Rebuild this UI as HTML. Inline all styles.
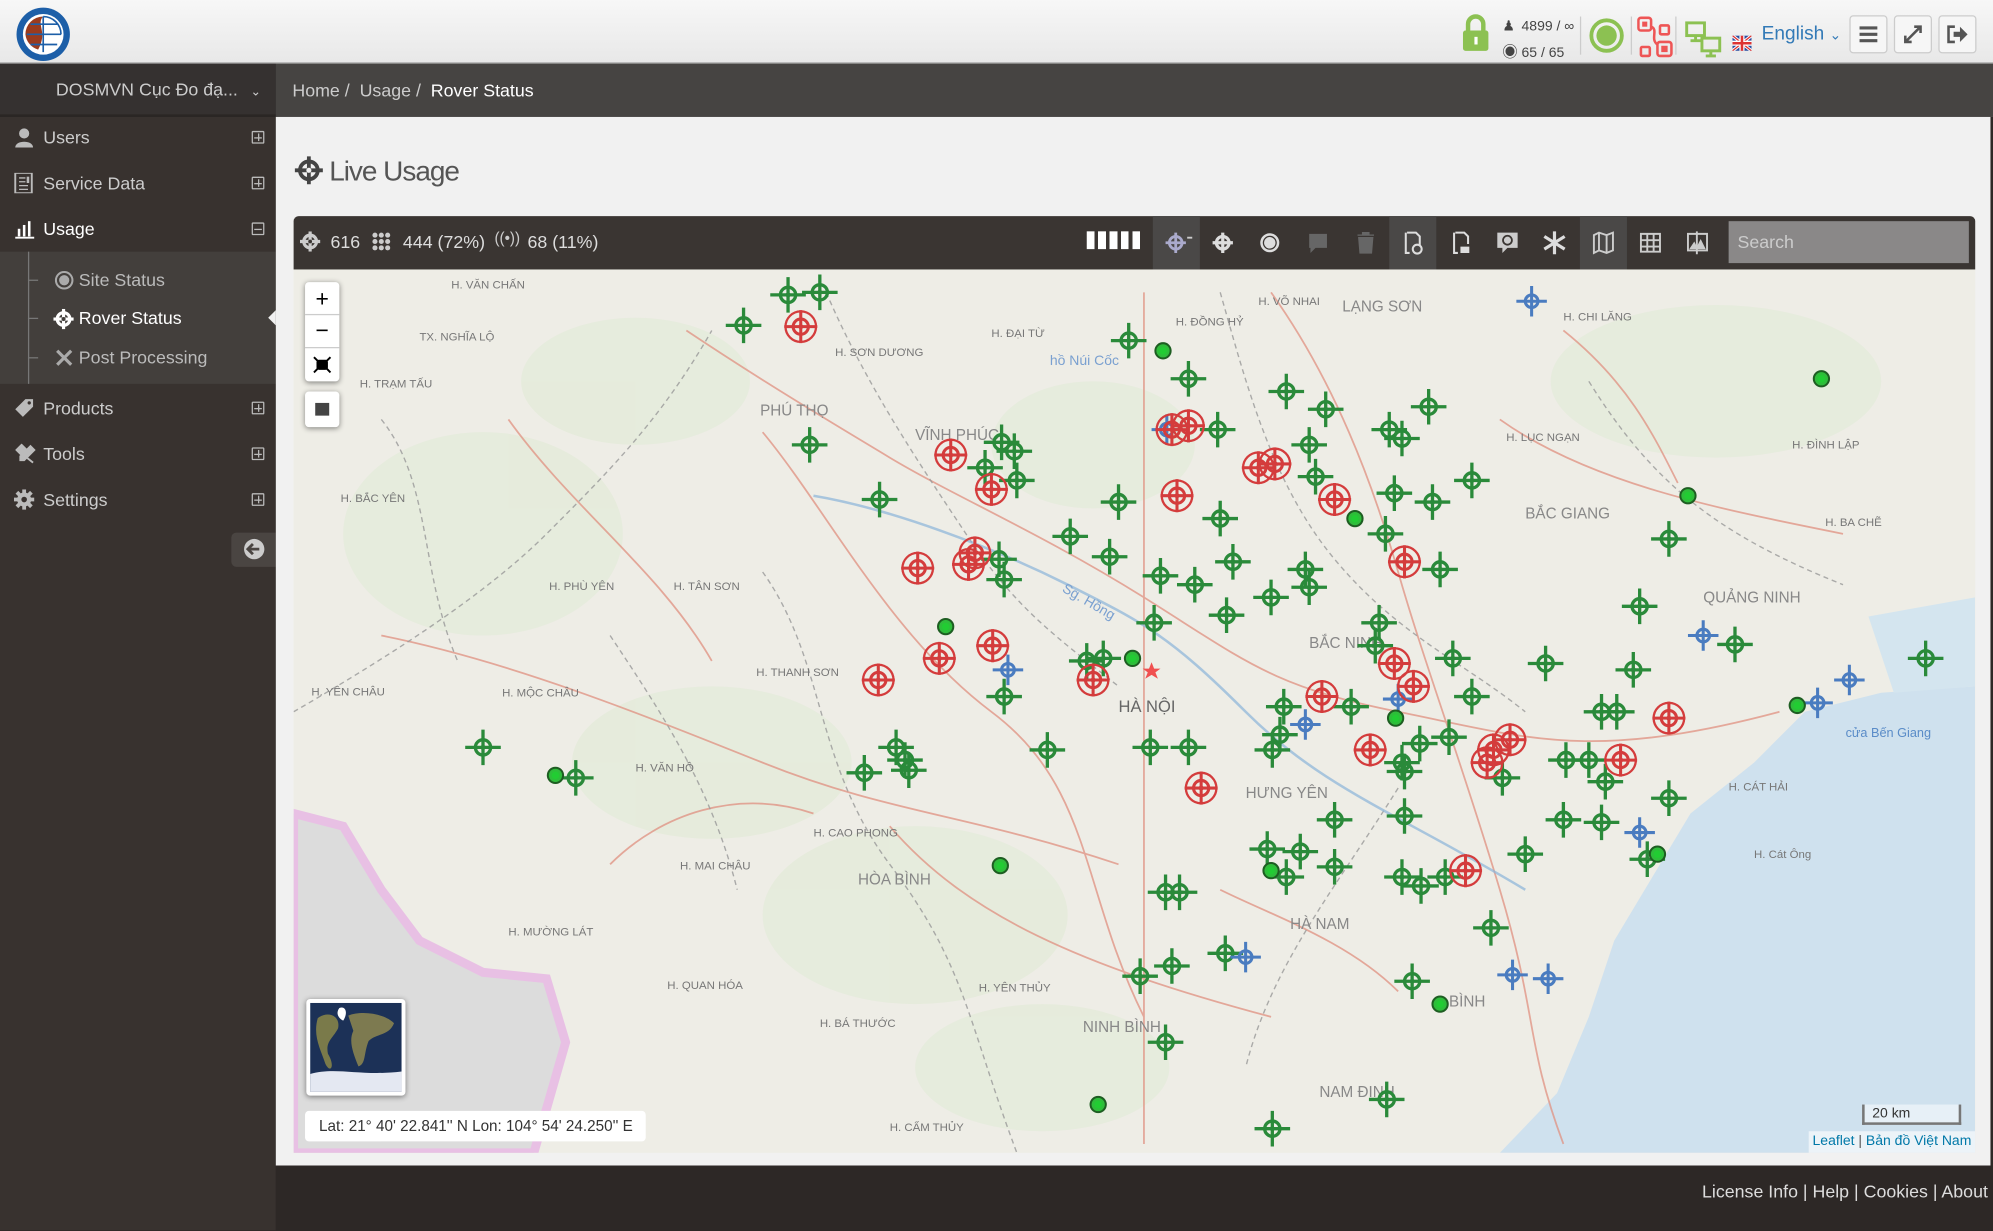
<!DOCTYPE html>
<html><head><meta charset="utf-8">
<style>
*{margin:0;padding:0;box-sizing:border-box}
html,body{width:1993px;height:1231px;overflow:hidden;background:#2d2826}
#w{position:absolute;left:0;top:0;width:1568px;height:968px;transform:scale(1.27105);transform-origin:0 0;font-family:"Liberation Sans","Noto Sans CJK SC",sans-serif;overflow:hidden}
.abs{position:absolute}
#hdr{left:0;top:0;width:1568px;height:50px;background:linear-gradient(#f7f7f7,#e8e8e8);border-bottom:1px solid #c9c9c9}
#side{left:0;top:50px;width:217px;height:918px;background:#38322f}
#dd{left:0;top:50px;width:217px;height:42px;background:#353130;border-bottom:2px solid #2a2624;color:#ccc;font-size:14px;line-height:40px;padding-left:44px}
.mi{position:absolute;left:0;width:217px;height:36px;color:#ccc;font-size:14px;line-height:36px;padding-left:34px}
.mi .pl{position:absolute;left:198px;top:13px;width:10px;height:10px;border:1px solid #bbb;border-radius:1px}
.mi .pl:before{content:"";position:absolute;left:1px;top:3.5px;width:6px;height:1px;background:#bbb}
.mi .pl.p:after{content:"";position:absolute;left:3.5px;top:1px;width:1px;height:6px;background:#bbb}
.mi svg{position:absolute;left:11px;top:10px}
#sub{left:0;top:198px;width:217px;height:104px;background:#433f3c}
.si{position:absolute;left:62px;color:#bbb;font-size:14px}
#bc{left:217px;top:50px;width:1351px;height:42px;background:#464442;color:#ccc;font-size:14px;line-height:42px;padding-left:13px}
#cont{left:217px;top:92px;width:1351px;height:825px;background:#f1f1f1;border-right:2px solid #2d2826}
#foot{left:217px;top:917px;width:1351px;height:51px;background:#2d2826;color:#ddd;font-size:14px;text-align:right;padding-right:4px;line-height:40px}
#tb{left:231px;top:170px;width:1323px;height:42px;background:#3a3532;border-radius:4px 4px 0 0;color:#ddd;font-size:14px}
.tbt{position:absolute;top:0;height:42px;width:37px}
.hl{background:#4a4847}
#map{left:231px;top:212px;width:1323px;height:695px;background:#eeede6;overflow:hidden}
.lc{position:absolute;background:#fff;border-radius:3px;box-shadow:0 1px 4px rgba(0,0,0,.45)}
.btn{position:absolute;top:12px;width:30px;height:30px;border:1px solid #ccc;border-radius:3px;background:#f6f6f6}
</style></head><body><div id="w">

<div id="hdr" class="abs">
 <svg class="abs" style="left:12px;top:5px" width="44" height="44" viewBox="0 0 44 44">
  <circle cx="22" cy="22" r="21" fill="#1d5fa8"/><circle cx="22" cy="22" r="16" fill="#fff"/>
  <path d="M8 22 A14 14 0 0 1 22 8 C16 14 26 20 18 34 A14 14 0 0 1 8 22Z" fill="#9a3b1e"/>
  <path d="M22 8 A14 14 0 0 1 36 22 M22 8 V36 M9 22H36 M12 14H33 M12 30H33" stroke="#1d5fa8" stroke-width="1.3" fill="none"/>
 </svg>
 <svg class="abs" style="left:1150px;top:11px" width="22" height="30"><path d="M5 13V8a6 6 0 0 1 12 0v5" stroke="#8cc152" stroke-width="3.5" fill="none"/><rect x="1" y="13" width="20" height="16" rx="2" fill="#8cc152"/><rect x="10" y="18" width="2.5" height="6" fill="#fff"/></svg>
 <div class="abs" style="left:1182px;top:11px;font-size:11px;color:#444;line-height:20px">
  <div><span style="display:inline-block;width:12px">&#9823;</span> 4899 / ∞</div>
  <div><span style="display:inline-block;width:12px;font-size:12px">◉</span> 65 / 65</div>
 </div>
 <div class="abs" style="left:1243px;top:13px;width:1px;height:30px;background:#ccc"></div>
 <svg class="abs" style="left:1250px;top:14px" width="28" height="28"><circle cx="14" cy="14" r="12" stroke="#8cc152" stroke-width="3" fill="none"/><circle cx="14" cy="14" r="8" fill="#8cc152"/></svg>
 <div class="abs" style="left:1283px;top:13px;width:1px;height:30px;background:#ccc"></div>
 <svg class="abs" style="left:1288px;top:13px" width="30" height="37"><g fill="none" stroke="#ee5555" stroke-width="2"><rect x="1" y="1" width="10" height="10" rx="2"/><rect x="18" y="7" width="7" height="7" rx="1"/><rect x="3" y="24" width="7" height="7" rx="1"/><rect x="16" y="20" width="11" height="11" rx="2"/><path d="M11 8 C17 10 10 18 16 22"/></g><rect x="4" y="4" width="4" height="4" fill="#e55"/><rect x="19" y="23" width="5" height="5" fill="#e55"/></svg>
 <div class="abs" style="left:1318px;top:13px;width:1px;height:30px;background:#ccc"></div>
 <svg class="abs" style="left:1325px;top:16px" width="30" height="36"><g fill="none" stroke="#8cc152" stroke-width="2.3"><rect x="2" y="2" width="14" height="10"/><rect x="14" y="14" width="14" height="10"/><path d="M9 12v4M5 16h8M21 24v4M17 28h8"/></g></svg>
 <svg class="abs" style="left:1363px;top:28px" width="15" height="12"><rect width="15" height="12" fill="#2a4ea0"/><path d="M0 0L15 12M15 0L0 12" stroke="#fff" stroke-width="2.5"/><path d="M0 0L15 12M15 0L0 12" stroke="#d33" stroke-width="1"/><path d="M7.5 0V12M0 6H15" stroke="#fff" stroke-width="4"/><path d="M7.5 0V12M0 6H15" stroke="#d33" stroke-width="2"/></svg>
 <div class="abs" style="left:1386px;top:18px;font-size:15px;color:#337ab7">English <span style="font-size:11px">&#8964;</span></div>
 <div class="btn" style="left:1455px"><svg width="28" height="28"><path d="M7 9H21M7 14H21M7 19H21" stroke="#555" stroke-width="2.5"/></svg></div>
 <div class="btn" style="left:1490px"><svg width="28" height="28"><path d="M8 20L20 8M15 8H20V13M8 15V20H13" stroke="#555" stroke-width="2" fill="none"/></svg></div>
 <div class="btn" style="left:1525px"><svg width="28" height="28"><path d="M12 8H7V20H12" stroke="#555" stroke-width="2" fill="none"/><path d="M11 12H16V8L22 14L16 20V16H11Z" fill="#555"/></svg></div>
</div>

<div id="side" class="abs"></div>
<div id="dd" class="abs">DOSMVN Cục Đo đạ... <span style="font-size:10px;margin-left:6px">&#8964;</span></div>
<div class="mi" style="top:90px"><svg width="16" height="16"><circle cx="8" cy="5" r="4" fill="#bbb"/><path d="M1 16C1 10 15 10 15 16Z" fill="#bbb"/></svg>Users<div class="pl p"></div></div>
<div class="mi" style="top:126px"><svg width="16" height="16"><rect x="1" y="0" width="13" height="16" fill="none" stroke="#bbb" stroke-width="1.5"/><path d="M4 4H9M4 7H9M4 10H11M4 13H11" stroke="#bbb"/><rect x="10" y="3" width="2" height="5" fill="#bbb"/></svg>Service Data<div class="pl p"></div></div>
<div class="mi" style="top:162px;color:#fff"><svg width="16" height="16"><path d="M1 15H16" stroke="#fff" stroke-width="1.5"/><rect x="3" y="8" width="2" height="6" fill="#fff"/><rect x="7" y="5" width="2" height="9" fill="#fff"/><rect x="11" y="2" width="2" height="12" fill="#fff"/></svg>Usage<div class="pl"></div></div>
<div id="sub" class="abs"><div class="abs" style="left:22px;top:0;width:1px;height:104px;background:#777"></div>
 <div class="abs" style="left:22px;top:22px;width:8px;height:1px;background:#777"></div>
 <div class="abs" style="left:22px;top:52px;width:8px;height:1px;background:#777"></div>
 <div class="abs" style="left:22px;top:83px;width:8px;height:1px;background:#777"></div>
</div>
<svg class="abs" style="left:43px;top:213px" width="15" height="15"><circle cx="7.5" cy="7.5" r="6.5" fill="none" stroke="#aaa" stroke-width="1.6"/><circle cx="7.5" cy="7.5" r="4" fill="#aaa"/></svg>
<div class="si" style="top:212px">Site Status</div>
<svg class="abs" style="left:42px;top:243px" width="16" height="16"><circle cx="8" cy="8" r="5" fill="none" stroke="#fff" stroke-width="2.5"/><path d="M8 0V16M0 8H16" stroke="#fff" stroke-width="2.5"/><circle cx="8" cy="8" r="1.6" fill="#433f3c"/></svg>
<div class="si" style="top:242px;color:#fff">Rover Status</div>
<div class="abs" style="left:211px;top:244px;width:0;height:0;border-top:6px solid transparent;border-bottom:6px solid transparent;border-right:6px solid #f1f1f1"></div>
<svg class="abs" style="left:44px;top:275px" width="13" height="13"><path d="M1 1L12 12M12 1L1 12" stroke="#aaa" stroke-width="2.5"/></svg>
<div class="si" style="top:273px">Post Processing</div>
<div class="mi" style="top:303px"><svg width="16" height="16"><path d="M9 1H15V7L7 15L1 9Z" fill="#bbb"/><circle cx="12" cy="4" r="1.3" fill="#38322f"/></svg>Products<div class="pl p"></div></div>
<div class="mi" style="top:339px"><svg width="20" height="16"><path d="M2 5L6 1L9 4L5 8ZM5 7L15 15M13 2L16 5L8 13L5 13L5 10Z" fill="#bbb" stroke="#bbb" stroke-width="1.5"/></svg>Tools<div class="pl p"></div></div>
<div class="mi" style="top:375px"><svg width="16" height="16"><circle cx="8" cy="8" r="5.5" fill="#bbb"/><path d="M8 0V16M0 8H16M2.3 2.3L13.7 13.7M13.7 2.3L2.3 13.7" stroke="#bbb" stroke-width="3"/><circle cx="8" cy="8" r="2.2" fill="#38322f"/></svg>Settings<div class="pl p"></div></div>
<div class="abs" style="left:182px;top:419px;width:35px;height:27px;background:#4a4542;border-radius:4px 0 0 4px"><svg width="35" height="27"><circle cx="18" cy="13" r="8" fill="#ccc"/><path d="M22 13H14M17 9L13 13L17 17" stroke="#4a4542" stroke-width="2.2" fill="none"/></svg></div>

<div id="bc" class="abs">Home / &nbsp;Usage / &nbsp;<span style="color:#fff">Rover Status</span></div>
<div id="cont" class="abs"></div>
<svg class="abs" style="left:231px;top:122px" width="24" height="24"><circle cx="12" cy="12" r="7" fill="none" stroke="#444" stroke-width="3"/><path d="M12 1V23M1 12H23" stroke="#444" stroke-width="3"/><circle cx="12" cy="12" r="2" fill="#f1f1f1"/></svg>
<div class="abs" style="left:259px;top:122px;font-size:22px;color:#555;letter-spacing:-0.8px;font-weight:300">Live Usage</div>

<div id="tb" class="abs">
 <svg class="abs" style="left:5px;top:12px" width="16" height="16"><circle cx="8" cy="8" r="5" fill="none" stroke="#ccc" stroke-width="2.5"/><path d="M8 0V16M0 8H16" stroke="#ccc" stroke-width="2.5"/><circle cx="8" cy="8" r="1.5" fill="#3a3532"/></svg>
 <div class="abs" style="left:29px;top:12px">616</div>
 <svg class="abs" style="left:61px;top:12px" width="16" height="16" fill="#ccc"><circle cx="3" cy="3" r="2"/><circle cx="8" cy="3" r="2"/><circle cx="13" cy="3" r="2"/><circle cx="3" cy="8" r="2"/><circle cx="8" cy="8" r="2"/><circle cx="13" cy="8" r="2"/><circle cx="3" cy="13" r="2"/><circle cx="8" cy="13" r="2"/><circle cx="13" cy="13" r="2"/></svg>
 <div class="abs" style="left:86px;top:12px">444 (72%)</div>
 <div class="abs" style="left:158px;top:10px;font-size:12px;color:#ccc">((•))</div>
 <div class="abs" style="left:184px;top:12px">68 (11%)</div>
 <div class="abs" style="left:624px;top:12px;width:42px;height:14px;background:repeating-linear-gradient(90deg,#fff 0 6px,transparent 6px 9px)"></div>
 <div class="tbt hl" style="left:676px"><svg width="37" height="42"><circle cx="18" cy="21" r="5" fill="none" stroke="#aac" stroke-width="2.2"/><path d="M18 13V29M10 21H26" stroke="#aac" stroke-width="2.2"/><path d="M27 17H31" stroke="#ccc" stroke-width="1.5"/></svg></div>
 <div class="tbt" style="left:713px"><svg width="37" height="42"><circle cx="18" cy="21" r="5" fill="none" stroke="#ddd" stroke-width="2.5"/><path d="M18 13V29M10 21H26" stroke="#ddd" stroke-width="2.5"/></svg></div>
 <div class="tbt" style="left:750px"><svg width="37" height="42"><circle cx="18" cy="21" r="6.5" fill="none" stroke="#ddd" stroke-width="2"/><circle cx="18" cy="21" r="4.5" fill="#ddd"/></svg></div>
 <div class="tbt" style="left:788px"><svg width="37" height="42"><path d="M11 14H25V25H16L12 29V25H11Z" fill="#666"/></svg></div>
 <div class="tbt" style="left:825px"><svg width="37" height="42"><path d="M12 15H25M16 15V13H21V15M13 17H24L23 29H14Z" fill="#666" stroke="#666"/></svg></div>
 <div class="tbt hl" style="left:862px"><svg width="37" height="42"><path d="M14 13H21L24 16V23M16 29H13V13" stroke="#ddd" stroke-width="1.6" fill="none"/><circle cx="22" cy="26" r="3.5" fill="none" stroke="#ddd" stroke-width="1.6"/></svg></div>
 <div class="tbt" style="left:900px"><svg width="37" height="42"><path d="M14 13H21L24 16V22M16 29H13V13" stroke="#ddd" stroke-width="1.6" fill="none"/><path d="M18 24H25V29H18Z" fill="#ddd"/></svg></div>
 <div class="tbt" style="left:937px"><svg width="37" height="42"><path d="M10 13H26V25H18L14 29V25H10Z" fill="#ccc"/><circle cx="18" cy="19" r="3.5" fill="none" stroke="#3a3532" stroke-width="1.4"/></svg></div>
 <div class="tbt" style="left:974px"><svg width="37" height="42"><path d="M18 12V30M10 16L26 26M10 26L26 16" stroke="#ddd" stroke-width="2.5"/></svg></div>
 <div class="tbt hl" style="left:1012px"><svg width="37" height="42"><path d="M11 15L15 13L21 15L26 13V27L21 29L15 27L11 29Z M15 13V27M21 15V29" fill="none" stroke="#ccc" stroke-width="1.5"/></svg></div>
 <div class="tbt" style="left:1049px"><svg width="37" height="42"><path d="M11 14H26V28H11ZM11 19H26M11 24H26M16 14V28M21 14V28" fill="none" stroke="#ccc" stroke-width="1.5"/></svg></div>
 <div class="tbt" style="left:1086px"><svg width="37" height="42"><path d="M11 14H26V27H11Z M18 12V30" fill="none" stroke="#ccc" stroke-width="1.5"/><path d="M12 26L16 20L18 24L21 18L25 26Z" fill="#ccc"/></svg></div>
 <div class="abs" style="left:1129px;top:4px;width:189px;height:33px;background:#8a8888;color:#ccc;font-size:14px;line-height:33px;padding-left:7px">Search</div>
</div>

<div id="map" class="abs">
<svg width="1323" height="695" viewBox="231 212 1323 695" style="position:absolute;left:0;top:0">
<defs>
 <g id="g"><circle r="6" fill="none" stroke="#2a8a3a" stroke-width="2.6"/><path d="M-14 0H14M0-14V14" stroke="#2a8a3a" stroke-width="2.6"/><circle r="2" fill="#2a8a3a"/></g>
 <g id="r"><circle r="12" fill="none" stroke="#d43c3c" stroke-width="1.8"/><circle r="6" fill="none" stroke="#d43c3c" stroke-width="2.4"/><path d="M-13 0H13M0-13V13" stroke="#d43c3c" stroke-width="2.4"/><circle r="2" fill="#d43c3c"/></g>
 <g id="b"><circle r="5" fill="none" stroke="#4a7cc0" stroke-width="2.4"/><path d="M-12 0H12M0-12V12" stroke="#4a7cc0" stroke-width="2.4"/></g>
 <g id="d"><circle r="6" fill="#2ebd3a" stroke="#1e5e22" stroke-width="1.6"/><circle r="3" fill="#22cc33"/></g>
</defs>
<g fill="#e3ebd8" opacity=".7"><ellipse cx="380" cy="420" rx="110" ry="80"/><ellipse cx="560" cy="600" rx="110" ry="60"/><ellipse cx="720" cy="720" rx="120" ry="70"/><ellipse cx="860" cy="350" rx="80" ry="50"/><ellipse cx="1350" cy="300" rx="130" ry="60"/><ellipse cx="500" cy="300" rx="90" ry="50"/><ellipse cx="820" cy="840" rx="100" ry="50"/></g>
<path d="M231 640 L270 650 L300 700 L330 740 L380 765 L430 770 L445 820 L420 907 L231 907Z" fill="#dcdcdc" stroke="#e8c0e4" stroke-width="7"/>
<path d="M1180 907 L1225 860 L1250 800 L1270 740 L1300 690 L1330 640 L1380 600 L1420 560 L1480 545 L1554 540 L1554 907Z" fill="#cfe1ee"/>
<path d="M1470 485 L1554 470 L1554 540 L1490 545Z" fill="#d4e5ef"/>
<g fill="none" stroke="#e09080" stroke-width="1.4" opacity=".75">
<path d="M540 260 C600 300 650 330 700 360 S820 420 900 470 S1000 540 1100 560 S1250 600 1400 560"/>
<path d="M900 230 V900"/><path d="M600 340 C650 400 700 500 780 560 S850 700 900 800"/>
<path d="M1000 230 C1050 300 1080 380 1100 450 S1150 600 1180 700 S1200 820 1230 900"/>
<path d="M300 500 C400 520 500 560 600 600 S760 640 880 680"/><path d="M1180 330 C1250 380 1350 400 1450 420"/>
<path d="M700 650 C760 720 850 760 1000 800"/><path d="M400 330 C450 400 520 450 560 520"/>
<path d="M480 680 C520 640 580 620 640 640"/><path d="M1230 260 C1280 300 1300 340 1320 380"/><path d="M960 700 C1000 720 1060 740 1100 780"/>
</g>
<g fill="none" stroke="#999" stroke-width="1.1" stroke-dasharray="4 3" opacity=".8">
<path d="M231 560 C300 520 380 470 430 420 S520 330 560 260"/><path d="M650 230 C680 300 720 360 760 420 S830 500 880 540"/>
<path d="M960 230 C980 300 1000 380 1050 440 S1150 520 1200 560"/><path d="M600 450 C650 520 640 600 700 680 S760 800 800 907"/>
<path d="M1100 620 C1050 700 1000 760 980 840"/><path d="M1250 300 C1300 380 1350 420 1450 460"/>
<path d="M300 330 C340 380 330 450 360 520"/><path d="M480 500 C520 560 560 620 580 700"/>
</g>
<g fill="none" stroke="#8ab4d8" stroke-width="2" opacity=".7"><path d="M640 390 C700 400 780 430 840 460 S920 500 980 560 S1100 640 1200 700"/></g>
<g font-family="Liberation Sans" font-size="9" fill="#777">
<text x="355" y="227">H. VĂN CHẤN</text><text x="330" y="268">TX. NGHĨA LỘ</text><text x="283" y="305">H. TRẠM TẤU</text><text x="657" y="280">H. SƠN DƯƠNG</text><text x="780" y="265">H. ĐẠI TỪ</text>
<text x="925" y="256">H. ĐỒNG HỶ</text><text x="990" y="240">H. VÕ NHAI</text><text x="1056" y="245" font-size="12" fill="#888">LẠNG SƠN</text><text x="1230" y="252">H. CHI LĂNG</text>
<text x="598" y="327" font-size="12" fill="#888">PHÚ THỌ</text><text x="720" y="346" font-size="12" fill="#888">VĨNH PHÚC</text><text x="268" y="395">H. BẮC YÊN</text><text x="1185" y="347">H. LỤC NGẠN</text>
<text x="1200" y="408" font-size="12" fill="#888">BẮC GIANG</text><text x="1340" y="474" font-size="12" fill="#888">QUẢNG NINH</text><text x="432" y="464">H. PHÙ YÊN</text><text x="530" y="464">H. TÂN SƠN</text>
<text x="880" y="560" font-size="13" fill="#666">HÀ NỘI</text><text x="1030" y="510" font-size="12" fill="#888">BẮC NINH</text><text x="595" y="532">H. THANH SƠN</text><text x="395" y="548">H. MỘC CHÂU</text>
<text x="245" y="547">H. YÊN CHÂU</text><text x="980" y="628" font-size="12" fill="#888">HƯNG YÊN</text><text x="675" y="696" font-size="12" fill="#888">HÒA BÌNH</text><text x="1015" y="731" font-size="12" fill="#888">HÀ NAM</text>
<text x="640" y="658">H. CAO PHONG</text><text x="500" y="607">H. VĂN HỒ</text><text x="535" y="684">H. MAI CHÂU</text><text x="400" y="736">H. MƯỜNG LÁT</text>
<text x="852" y="812" font-size="12" fill="#888">NINH BÌNH</text><text x="1140" y="792" font-size="12" fill="#888">BÌNH</text><text x="1038" y="863" font-size="12" fill="#888">NAM ĐỊNH</text>
<text x="1360" y="622">H. CÁT HẢI</text><text x="1380" y="675">H. Cát Ông</text><text x="1436" y="414">H. BA CHẼ</text><text x="1410" y="353">H. ĐÌNH LẬP</text>
<text x="525" y="778">H. QUAN HÓA</text><text x="645" y="808">H. BÁ THƯỚC</text><text x="770" y="780">H. YÊN THỦY</text><text x="700" y="890">H. CẨM THỦY</text>
<text x="826" y="287" font-size="11" fill="#7aa0d0">hồ Núi Cốc</text><text x="835" y="465" font-size="11" fill="#7aa0d0" transform="rotate(30 835 465)">Sg. Hồng</text>
<text x="1452" y="580" font-size="10" fill="#5a8cc8">cửa Bến Giang</text>
</g>
<g>
<use href="#g" x="620" y="232"/><use href="#g" x="645" y="230"/><use href="#g" x="585" y="256"/><use href="#g" x="888" y="268"/><use href="#g" x="935" y="298"/><use href="#g" x="1012" y="308"/><use href="#g" x="1043" y="322"/><use href="#g" x="1124" y="320"/><use href="#g" x="958" y="338"/><use href="#g" x="1093" y="338"/><use href="#g" x="1103" y="345"/><use href="#g" x="1030" y="350"/><use href="#g" x="788" y="348"/><use href="#g" x="798" y="355"/><use href="#g" x="637" y="350"/><use href="#g" x="775" y="368"/><use href="#g" x="800" y="378"/><use href="#g" x="1158" y="378"/><use href="#g" x="1035" y="375"/><use href="#g" x="1097" y="388"/><use href="#g" x="1127" y="395"/><use href="#g" x="692" y="393"/><use href="#g" x="880" y="395"/><use href="#g" x="960" y="408"/><use href="#g" x="842" y="422"/><use href="#g" x="1090" y="420"/><use href="#g" x="873" y="438"/><use href="#g" x="1313" y="424"/><use href="#g" x="970" y="442"/><use href="#g" x="786" y="440"/><use href="#g" x="790" y="456"/><use href="#g" x="913" y="453"/><use href="#g" x="940" y="460"/><use href="#g" x="1027" y="448"/><use href="#g" x="1133" y="448"/><use href="#g" x="1030" y="462"/><use href="#g" x="965" y="484"/><use href="#g" x="908" y="490"/><use href="#g" x="1000" y="470"/><use href="#g" x="1290" y="477"/><use href="#g" x="1085" y="490"/><use href="#g" x="1082" y="508"/><use href="#g" x="1365" y="507"/><use href="#g" x="1143" y="518"/><use href="#g" x="1216" y="522"/><use href="#g" x="1285" y="527"/><use href="#g" x="1515" y="518"/><use href="#g" x="855" y="520"/><use href="#g" x="868" y="518"/><use href="#g" x="790" y="548"/><use href="#g" x="1158" y="548"/><use href="#g" x="1010" y="556"/><use href="#g" x="1063" y="556"/><use href="#g" x="1260" y="560"/><use href="#g" x="1272" y="560"/><use href="#g" x="1007" y="578"/><use href="#g" x="1117" y="585"/><use href="#g" x="1140" y="580"/><use href="#g" x="1001" y="590"/><use href="#g" x="905" y="588"/><use href="#g" x="935" y="588"/><use href="#g" x="824" y="590"/><use href="#g" x="1232" y="598"/><use href="#g" x="1250" y="598"/><use href="#g" x="1103" y="600"/><use href="#g" x="1105" y="607"/><use href="#g" x="1263" y="615"/><use href="#g" x="1313" y="628"/><use href="#g" x="1182" y="612"/><use href="#g" x="705" y="588"/><use href="#g" x="715" y="606"/><use href="#g" x="680" y="608"/><use href="#g" x="712" y="598"/><use href="#g" x="380" y="588"/><use href="#g" x="453" y="612"/><use href="#g" x="1050" y="645"/><use href="#g" x="1105" y="642"/><use href="#g" x="1230" y="645"/><use href="#g" x="1260" y="647"/><use href="#g" x="997" y="668"/><use href="#g" x="1023" y="670"/><use href="#g" x="1200" y="672"/><use href="#g" x="1050" y="682"/><use href="#g" x="1012" y="690"/><use href="#g" x="1103" y="690"/><use href="#g" x="1118" y="697"/><use href="#g" x="1137" y="690"/><use href="#g" x="1296" y="676"/><use href="#g" x="917" y="702"/><use href="#g" x="928" y="702"/><use href="#g" x="1173" y="730"/><use href="#g" x="964" y="750"/><use href="#g" x="922" y="760"/><use href="#g" x="897" y="768"/><use href="#g" x="1111" y="772"/><use href="#g" x="917" y="820"/><use href="#g" x="1091" y="865"/><use href="#g" x="1001" y="888"/>
<use href="#b" x="1205" y="237"/><use href="#b" x="918" y="338"/><use href="#b" x="793" y="527"/><use href="#b" x="1100" y="550"/><use href="#b" x="1027" y="570"/><use href="#b" x="1340" y="500"/><use href="#b" x="1430" y="553"/><use href="#b" x="1455" y="535"/><use href="#b" x="1290" y="655"/><use href="#b" x="980" y="753"/><use href="#b" x="1190" y="767"/><use href="#b" x="1218" y="770"/>
<use href="#r" x="630" y="257"/><use href="#r" x="922" y="338"/><use href="#r" x="935" y="335"/><use href="#r" x="748" y="358"/><use href="#r" x="780" y="385"/><use href="#r" x="990" y="368"/><use href="#r" x="1003" y="365"/><use href="#r" x="1050" y="393"/><use href="#r" x="926" y="390"/><use href="#r" x="722" y="447"/><use href="#r" x="767" y="435"/><use href="#r" x="762" y="444"/><use href="#r" x="1105" y="442"/><use href="#r" x="781" y="508"/><use href="#r" x="739" y="518"/><use href="#r" x="691" y="535"/><use href="#r" x="860" y="535"/><use href="#r" x="1040" y="548"/><use href="#r" x="1097" y="522"/><use href="#r" x="1112" y="540"/><use href="#r" x="1078" y="590"/><use href="#r" x="1170" y="600"/><use href="#r" x="1175" y="590"/><use href="#r" x="1188" y="582"/><use href="#r" x="1275" y="598"/><use href="#r" x="1313" y="565"/><use href="#r" x="1153" y="685"/><use href="#r" x="945" y="620"/>
<use href="#d" x="915" y="276"/><use href="#d" x="1433" y="298"/><use href="#d" x="1328" y="390"/><use href="#d" x="1066" y="408"/><use href="#d" x="744" y="493"/><use href="#d" x="891" y="518"/><use href="#d" x="1098" y="565"/><use href="#d" x="1414" y="555"/><use href="#d" x="437" y="610"/><use href="#d" x="787" y="681"/><use href="#d" x="1000" y="685"/><use href="#d" x="1304" y="672"/><use href="#d" x="1133" y="790"/><use href="#d" x="864" y="869"/>
</g>
<path d="M906 521l2 5h5l-4 3 2 5-5-3-5 3 2-5-4-3h5z" fill="#f05050"/>
</svg>
<div class="lc" style="left:9px;top:10px;width:27px;height:78px">
 <div style="height:26px;text-align:center;font-size:18px;line-height:26px;border-bottom:1px solid #ccc">+</div>
 <div style="height:26px;text-align:center;font-size:18px;line-height:24px;border-bottom:1px solid #ccc">−</div>
 <svg width="27" height="26"><path d="M7 7l3 3M20 7l-3 3M7 19l3-3M20 19l-3-3" stroke="#000" stroke-width="1.5"/><rect x="9" y="9" width="9" height="8" rx="2"/></svg>
</div>
<div class="lc" style="left:9px;top:96px;width:27px;height:28px"><div style="margin:9px 8px;width:11px;height:10px;background:#444"></div></div>
<div class="lc" style="left:10px;top:574px;width:78px;height:76px;padding:3px">
 <svg width="72" height="70"><rect width="72" height="70" fill="#1c3157"/><path d="M6 12C14 6 24 10 22 20C18 28 12 30 14 40C20 50 16 56 12 48C8 36 2 26 6 12Z" fill="#7a7a4a"/><path d="M30 10C40 6 58 8 66 16C62 26 52 24 46 30C42 40 44 48 38 50C34 40 30 30 34 22Z" fill="#7d7a50"/><path d="M23 4C28 2 30 8 26 14C22 12 20 8 23 4Z" fill="#fff"/><path d="M0 56C20 50 40 58 72 54V70H0Z" fill="#e4e8f2"/></svg>
</div>
<div class="lc" style="left:9px;top:662px;width:268px;height:24px;font-size:12px;line-height:24px;padding-left:11px;color:#333;box-shadow:none">Lat: 21° 40' 22.841'' N Lon: 104° 54' 24.250'' E</div>
<div class="abs" style="left:1234px;top:657px;width:78px;height:16px;border:2px solid #777;border-top:none;background:rgba(255,255,255,.5);font-size:11px;line-height:14px;padding-left:6px;color:#333">20 km</div>
<div class="abs" style="left:1192px;top:678px;width:131px;height:17px;background:rgba(255,255,255,.6);font-size:11px;line-height:17px;padding-left:3px;color:#0078a8">Leaflet <span style="color:#555">|</span> Bản đồ Việt Nam</div>
</div>

<div id="foot" class="abs">License Info | Help | Cookies | About</div>
</div></body></html>
